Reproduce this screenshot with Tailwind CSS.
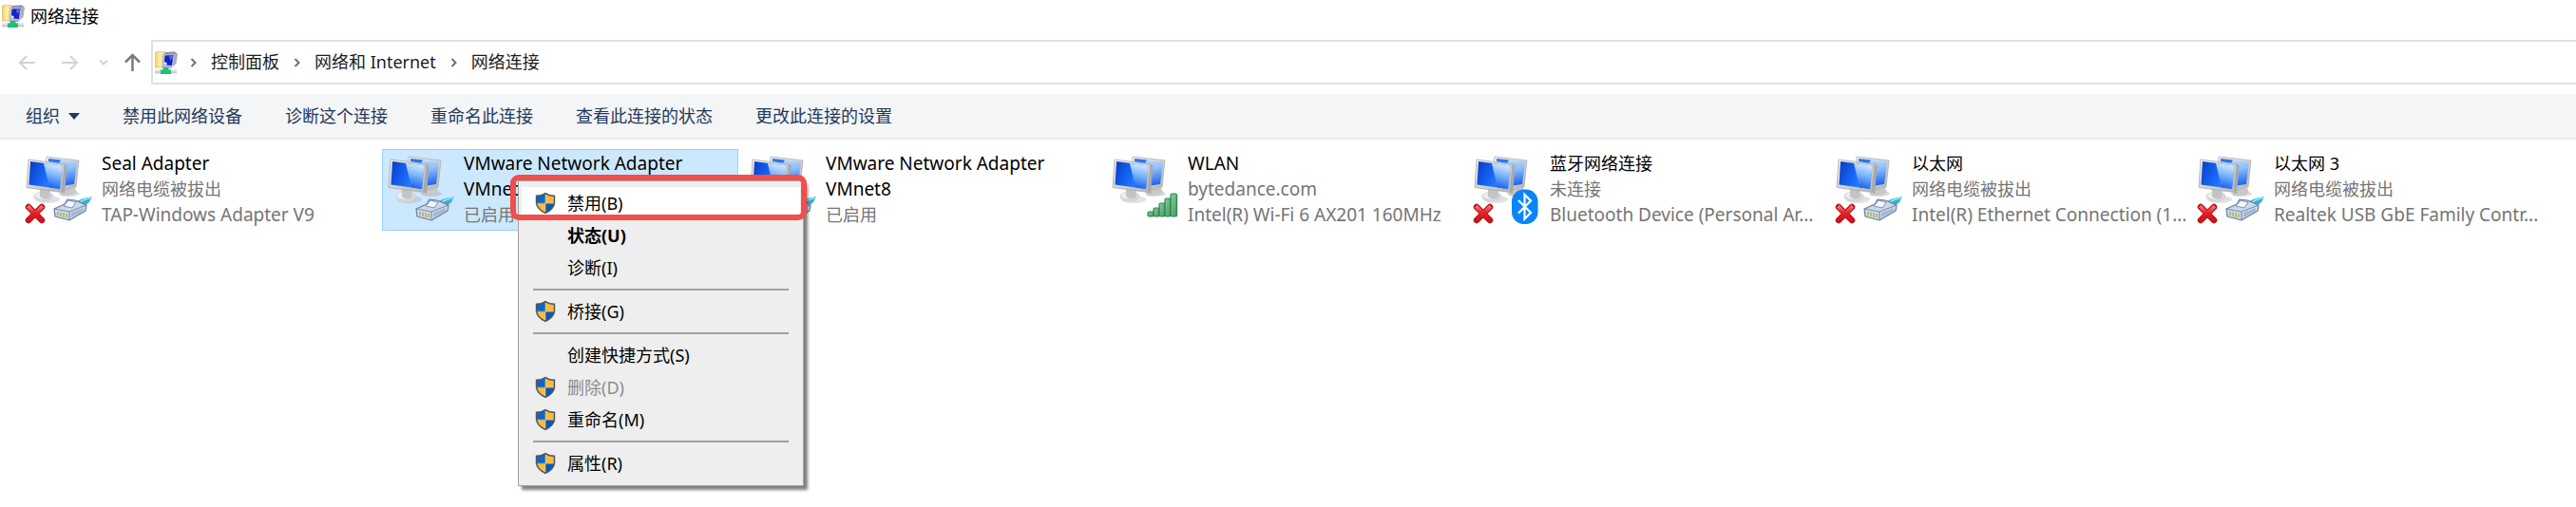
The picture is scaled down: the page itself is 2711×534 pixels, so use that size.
<!DOCTYPE html>
<html lang="zh-CN">
<head>
    <meta charset="UTF-8">
    <meta name="viewport" content="width=device-width, initial-scale=1.0">
    <title>网络连接</title>
    <script src="https://cdn.jsdelivr.net/npm/@tailwindcss/browser@4"></script>
    <style>
        body {
            font-family: 'Noto Sans', 'Noto Sans CJK SC', sans-serif;
        }
    </style>
</head>
<body class="bg-white min-h-screen text-[18px] leading-[27px] text-black">

    <!-- Shared icons -->
    <svg width="0" height="0" class="absolute" aria-hidden="true">
        <defs>
            <linearGradient id="screenFront" x1="0" y1="0.1" x2="1" y2="0.5">
                <stop offset="0" stop-color="#0a3fc4"/>
                <stop offset="0.45" stop-color="#1462f2"/>
                <stop offset="1" stop-color="#2f8bff"/>
            </linearGradient>
            <linearGradient id="screenGlow" x1="0.6" y1="0" x2="0.4" y2="1">
                <stop offset="0" stop-color="#d9ecff"/>
                <stop offset="0.45" stop-color="#7db6fb"/>
                <stop offset="1" stop-color="#0f5cf0"/>
            </linearGradient>
            <linearGradient id="screenBack" x1="0.4" y1="0" x2="0.6" y2="1">
                <stop offset="0" stop-color="#b9dbfe"/>
                <stop offset="0.4" stop-color="#8fc0fb"/>
                <stop offset="1" stop-color="#1b62ea"/>
            </linearGradient>
            <linearGradient id="metal" x1="0" y1="0" x2="1" y2="1">
                <stop offset="0" stop-color="#f3f3f3"/>
                <stop offset="1" stop-color="#b4b4b6"/>
            </linearGradient>
            <linearGradient id="red" x1="0" y1="0" x2="0" y2="1">
                <stop offset="0" stop-color="#f58a8a"/>
                <stop offset="0.45" stop-color="#e32227"/>
                <stop offset="1" stop-color="#cf0d12"/>
            </linearGradient>
            <linearGradient id="green" x1="0" y1="0" x2="1" y2="1">
                <stop offset="0" stop-color="#8ccf9f"/>
                <stop offset="1" stop-color="#3f9a62"/>
            </linearGradient>
            <linearGradient id="folder" x1="0" y1="0" x2="1" y2="0">
                <stop offset="0" stop-color="#e9cf72"/>
                <stop offset="0.4" stop-color="#fdf0a8"/>
                <stop offset="1" stop-color="#e8cc66"/>
            </linearGradient>

            <symbol id="monitors" viewBox="24 18 76 74">
                <ellipse cx="73" cy="59" rx="11" ry="3" fill="#9a9a9a" opacity="0.35"/>
                <path d="M64 54 L79 53 L81 58 Q74 62 64 61 Z" fill="#c9c9cb"/>
                <path d="M49 20 L83 24 L80 52 L66 56 L47 40 Z" fill="url(#metal)" stroke="#b0b0b2" stroke-width="0.8" stroke-linejoin="round"/>
                <path d="M51 22 L81 26 L78 49 L64 51 L50 36 Z" fill="url(#screenBack)"/>
                <path d="M51 22 L64 23.500 L62 27 L51 25 Z" fill="#2a78ec"/>
                <ellipse cx="50" cy="65" rx="13" ry="4" fill="#8a8a8a" opacity="0.25"/>
                <ellipse cx="46" cy="62" rx="10.500" ry="5.500" fill="#d6d6d8"/>
                <ellipse cx="44" cy="61" rx="7" ry="3.500" fill="#eeeeef"/>
                <path d="M42 53 L53 55 L52 63 Q46 66 42 62 Z" fill="#c4c4c6"/>
                <path d="M68 28 L70.500 29 L68 59 L65 57.500 Z" fill="#a9a9ab"/>
                <path d="M30 23 L68 28 L65 57.500 L28 52.500 Z" fill="url(#metal)" stroke="#a9a9ab" stroke-width="0.8" stroke-linejoin="round"/>
                <path d="M32 25 L65.500 29.500 L63 54 L30.500 49.500 Z" fill="url(#screenFront)"/>
                <path d="M46 27 L65.500 29.500 L63 54 L52 52.500 Z" fill="url(#screenGlow)"/>
            </symbol>

            <symbol id="plug" viewBox="24 18 76 74">
                <path d="M79 68 Q85 64 97 62 L94 68 Q90 72 83 75 Z" fill="#35b2d6"/>
                <path d="M82 69 Q88 65 96 63" fill="none" stroke="#9fe3f2" stroke-width="1.500"/>
                <path d="M57 75 L68 70 L71 65 L79 66 L91 71 L90 77 L73 87 L58 83 Z" fill="#ccd9ea" stroke="#667d9c" stroke-width="1.200" stroke-linejoin="round"/>
                <path d="M57 75 L73 78 L91 71 M73 78 L73 87" fill="none" stroke="#7b91b0" stroke-width="1.200"/>
                <path d="M67 72 L72 66 L80 68 L76 74 Z" fill="#f4f8fc" stroke="#7b91b0" stroke-width="1"/>
                <path d="M75 79 L88 74 L88 77 L75 84 Z" fill="#a3b8d4"/>
                <path d="M61 78 V82 M64 78.500 V83 M67 79 V84 M70 80 V84" stroke="#bcae45" stroke-width="1.500"/>
            </symbol>

            <symbol id="cross" viewBox="24 18 76 74">
                <path d="M30 73 L44 87 M44 73 L30 87" stroke="#b01216" stroke-width="6.500" stroke-linecap="round"/>
                <path d="M27.500 73.500 L30.500 70.500 L37 76.500 L43.500 70.500 L46.500 73.500 L41 80 L46.500 86.500 L43.500 89.500 L37 83.500 L30.500 89.500 L27.500 86.500 L33 80 Z" fill="url(#red)" stroke="#c8161b" stroke-width="1" stroke-linejoin="round"/>
            </symbol>

            <symbol id="signal" viewBox="24 18 76 74">
                <g fill="url(#green)" stroke="#2f8350" stroke-width="1.200">
                    <rect x="65" y="78" width="6" height="5" rx="1.500"/>
                    <rect x="71" y="74" width="6" height="9" rx="1.500"/>
                    <rect x="77" y="69" width="6" height="14" rx="1.500"/>
                    <rect x="83" y="64" width="6" height="19" rx="1.500"/>
                    <rect x="89" y="59" width="6.500" height="24" rx="1.500"/>
                </g>
            </symbol>

            <symbol id="bluetooth" viewBox="24 18 76 74">
                <rect x="67" y="54.500" width="27.500" height="36.500" rx="12.500" fill="#0a84f8"/>
                <path d="M74 66 L87 79 L80.500 85.500 V60 L87 66.500 L74 79.500" fill="none" stroke="#fff" stroke-width="2.200"/>
            </symbol>

            <symbol id="shield" viewBox="0 0 22 24">
                <path d="M11 0.800 Q15.500 4 21.200 3.500 V12 Q20.500 19 11 23.200 Q1.500 19 0.800 12 V3.500 Q6.500 4 11 0.800 Z" fill="#4c5664"/>
                <path d="M11 2.500 Q7 5.200 2.300 5.100 V12 H11 Z" fill="#0f66c3"/>
                <path d="M11 2.500 Q15 5.200 19.700 5.100 V12 H11 Z" fill="#fdbb3b"/>
                <path d="M2.300 12.500 H11 V21.500 Q3.500 18 2.300 12.500 Z" fill="#fdbb3b"/>
                <path d="M19.700 12.500 H11 V21.500 Q18.500 18 19.700 12.500 Z" fill="#0b58b3"/>
                <path d="M11 3 V21 M2.300 12.200 H19.700" stroke="#cfd3c4" stroke-width="0.600"/>
            </symbol>

            <symbol id="network" viewBox="0 0 24 24">
                <path d="M0 1 L9 0 L13 2 V15 L10 17 H0 Z" fill="url(#folder)" stroke="#d8c071" stroke-width="0.800"/>
                <path d="M11 1 L21 0.500 L24 3 L22.500 13 L17 18 L7.500 17 L8 5 Z" fill="#a9aebf"/>
                <path d="M11 1 L21 0.500 L23 2.500 L11 3.500 Z" fill="#8d93a8"/>
                <path d="M9 4 L20.500 3 L19 16 L8.500 15.500 Z" fill="#c9cee2"/>
                <path d="M10.500 4.500 L19.500 3.800 L18 15 L9.500 14.500 Z" fill="#1a22c4"/>
                <path d="M14.500 4.500 L19.500 3.800 L19 8 L16 9.500 Z" fill="#4a62e0"/>
                <path d="M9.500 11 L12.500 12 L12.500 14.700 L9.500 14.500 Z" fill="#dfe4f8"/>
                <path d="M0 19.500 H23 V23.500 H0 Z" fill="#c9cdd0"/>
                <path d="M0 20.500 H23" stroke="#e9ebec" stroke-width="1"/>
                <path d="M8.500 17 H14.500 V19.500 H17 V24 H6 V19.500 H8.500 Z" fill="#1dbf7b"/>
            </symbol>

            <symbol id="chevron" viewBox="0 0 8 12">
                <path d="M1.500 2 L5.500 6 L1.500 10" fill="none" stroke="#707070" stroke-width="2"/>
            </symbol>
        </defs>
    </svg>

    <!-- Title bar -->
    <header class="flex items-center gap-1.5 h-[42px] pl-0.5 pb-2">
        <svg class="size-6"><use href="#network"/></svg>
        <h1>网络连接</h1>
    </header>

    <!-- Address bar -->
    <div class="flex items-center h-[47px]">
        <div class="flex items-center w-[159px] pl-[19px] shrink-0">
            <button type="button" aria-label="返回" class="w-[45px]">
                <svg class="w-[19px] h-5" viewBox="0 0 19 20" fill="none" stroke="#d2d2d2" stroke-width="2"><path d="M18 10 H2 M9 3 L2 10 L9 17"/></svg>
            </button>
            <button type="button" aria-label="前进" class="w-[40px]">
                <svg class="w-[19px] h-5" viewBox="0 0 19 20" fill="none" stroke="#d2d2d2" stroke-width="2"><path d="M1 10 H17 M10 3 L17 10 L10 17"/></svg>
            </button>
            <button type="button" aria-label="最近浏览的位置" class="w-[26px]">
                <svg class="w-[10px] h-2" viewBox="0 0 10 8" fill="none" stroke="#d2d2d2" stroke-width="2"><path d="M1 1.500 L5 5.500 L9 1.500"/></svg>
            </button>
            <button type="button" aria-label="上移">
                <svg class="w-[19px] h-5" viewBox="0 0 19 20" fill="none" stroke="#7b7b7b" stroke-width="2.500"><path d="M9.500 19 V2 M2 9.500 L9.500 2 L17 9.500"/></svg>
            </button>
        </div>
        <nav aria-label="地址" class="flex grow items-center h-full border-2 border-r-0 border-[#e0e0e0] pl-0.5 text-[#1c1c1c]">
            <svg class="size-6 mr-[13px]"><use href="#network"/></svg>
            <svg class="w-2 h-3 mr-[14px]"><use href="#chevron"/></svg>
            <a href="#">控制面板</a>
            <svg class="w-2 h-3 ml-[15px] mr-[14px]"><use href="#chevron"/></svg>
            <a href="#">网络和 Internet</a>
            <svg class="w-2 h-3 ml-[15px] mr-[14px]"><use href="#chevron"/></svg>
            <a href="#">网络连接</a>
        </nav>
    </div>

    <!-- Command bar -->
    <div class="flex items-center gap-[45px] mt-[10px] h-12 pl-[27px] bg-[#f4f5f7] border-b-2 border-[#e9ebeb] text-[#1e395b]">
        <button type="button" class="flex items-center gap-[9px]">
            组织
            <svg class="w-3 h-[7px]" viewBox="0 0 12 7" fill="#1e395b"><path d="M0 0 H12 L6 7 Z"/></svg>
        </button>
        <button type="button">禁用此网络设备</button>
        <button type="button">诊断这个连接</button>
        <button type="button">重命名此连接</button>
        <button type="button">查看此连接的状态</button>
        <button type="button">更改此连接的设置</button>
    </div>

    <!-- Connections -->
    <main class="pt-[10px] pl-[21px]">
        <ul class="flex gap-[6px] whitespace-nowrap">
            <li class="flex w-[375px] h-[86px] pl-[3px]">
                <svg class="w-[76px] h-[74px] mt-1.5 mr-[7px] shrink-0"><use href="#monitors"/><use href="#plug"/><use href="#cross"/></svg>
                <div class="pt-0.5 text-[#757575]">
                    <p class="text-[19px] text-black">Seal Adapter</p>
                    <p>网络电缆被拔出</p>
                    <p class="text-[19px]">TAP-Windows Adapter V9</p>
                </div>
            </li>

            <li class="relative flex w-[375px] h-[86px] pl-[3px] bg-[#cce8ff] outline outline-1 -outline-offset-1 outline-[#99d1ff]">
                <svg class="w-[76px] h-[74px] mt-1.5 mr-[7px] shrink-0"><use href="#monitors"/><use href="#plug"/></svg>
                <div class="pt-0.5 text-[#757575]">
                    <p class="text-[19px] text-black whitespace-normal">VMware Network Adapter VMnet1</p>
                    <p>已启用</p>
                </div>

                <!-- Context menu -->
                <div role="menu" class="absolute z-10 left-[143px] top-[33px] w-[301px] py-[6px] px-[3px] bg-[#eeeeee] border border-[#a0a0a0] shadow-[4px_4px_3px_rgba(0,0,0,0.5)]">
                    <button type="button" role="menuitem" class="flex items-center w-full h-[34px] pl-[14px] gap-3 bg-white"><svg class="w-[22px] h-6"><use href="#shield"/></svg>禁用(B)</button>
                    <button type="button" role="menuitem" class="flex items-center w-full h-[34px] pl-12 font-bold">状态(U)</button>
                    <button type="button" role="menuitem" class="flex items-center w-full h-[34px] pl-12">诊断(I)</button>
                    <hr class="my-[5px] mx-3 border-t-2 border-[#a0a0a0]">
                    <button type="button" role="menuitem" class="flex items-center w-full h-[34px] pl-[14px] gap-3"><svg class="w-[22px] h-6"><use href="#shield"/></svg>桥接(G)</button>
                    <hr class="my-[5px] mx-3 border-t-2 border-[#a0a0a0]">
                    <button type="button" role="menuitem" class="flex items-center w-full h-[34px] pl-12">创建快捷方式(S)</button>
                    <button type="button" role="menuitem" disabled class="flex items-center w-full h-[34px] pl-[14px] gap-3 text-[#8d8d8d]"><svg class="w-[22px] h-6"><use href="#shield"/></svg>删除(D)</button>
                    <button type="button" role="menuitem" class="flex items-center w-full h-[34px] pl-[14px] gap-3"><svg class="w-[22px] h-6"><use href="#shield"/></svg>重命名(M)</button>
                    <hr class="my-[5px] mx-3 border-t-2 border-[#a0a0a0]">
                    <button type="button" role="menuitem" class="flex items-center w-full h-[34px] pl-[14px] gap-3"><svg class="w-[22px] h-6"><use href="#shield"/></svg>属性(R)</button>
                </div>
                <div class="absolute z-20 left-[135px] top-[27px] w-[312px] h-12 border-6 border-[#f24e4b] rounded-[9px] pointer-events-none"></div>
            </li>

            <li class="flex w-[375px] h-[86px] pl-[3px]">
                <svg class="w-[76px] h-[74px] mt-1.5 mr-[7px] shrink-0"><use href="#monitors"/><use href="#plug"/></svg>
                <div class="pt-0.5 text-[#757575]">
                    <p class="text-[19px] text-black whitespace-normal">VMware Network Adapter VMnet8</p>
                    <p>已启用</p>
                </div>
            </li>

            <li class="flex w-[375px] h-[86px] pl-[3px]">
                <svg class="w-[76px] h-[74px] mt-1.5 mr-[7px] shrink-0"><use href="#monitors"/><use href="#signal"/></svg>
                <div class="pt-0.5 text-[19px] text-[#757575]">
                    <p class="text-black">WLAN</p>
                    <p>bytedance.com</p>
                    <p>Intel(R) Wi-Fi 6 AX201 160MHz</p>
                </div>
            </li>

            <li class="flex w-[375px] h-[86px] pl-[3px]">
                <svg class="w-[76px] h-[74px] mt-1.5 mr-[7px] shrink-0"><use href="#monitors"/><use href="#bluetooth"/><use href="#cross"/></svg>
                <div class="pt-0.5 text-[#757575]">
                    <p class="text-black">蓝牙网络连接</p>
                    <p>未连接</p>
                    <p class="text-[19px]">Bluetooth Device (Personal Ar...</p>
                </div>
            </li>

            <li class="flex w-[375px] h-[86px] pl-[3px]">
                <svg class="w-[76px] h-[74px] mt-1.5 mr-[7px] shrink-0"><use href="#monitors"/><use href="#plug"/><use href="#cross"/></svg>
                <div class="pt-0.5 text-[#757575]">
                    <p class="text-black">以太网</p>
                    <p>网络电缆被拔出</p>
                    <p class="text-[19px]">Intel(R) Ethernet Connection (1...</p>
                </div>
            </li>

            <li class="flex w-[375px] h-[86px] pl-[3px]">
                <svg class="w-[76px] h-[74px] mt-1.5 mr-[7px] shrink-0"><use href="#monitors"/><use href="#plug"/><use href="#cross"/></svg>
                <div class="pt-0.5 text-[#757575]">
                    <p class="text-black">以太网 3</p>
                    <p>网络电缆被拔出</p>
                    <p class="text-[19px]">Realtek USB GbE Family Contr...</p>
                </div>
            </li>
        </ul>
    </main>
</body>
</html>
